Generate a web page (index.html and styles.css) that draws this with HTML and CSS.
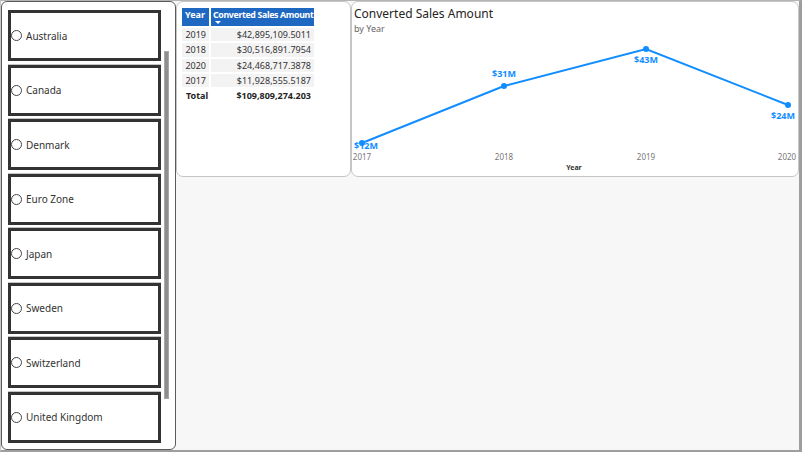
FILE: index.html
```html
<!DOCTYPE html>
<html>
<head>
<meta charset="utf-8">
<link rel="stylesheet" href="styles.css">
</head>
<body>
<div class="frame">
  <div class="slicer">
    <div class="items">
      <div class="opt"><div class="box"><span class="radio"></span><span class="lbl">Australia</span></div></div>
      <div class="opt"><div class="box"><span class="radio"></span><span class="lbl">Canada</span></div></div>
      <div class="opt"><div class="box"><span class="radio"></span><span class="lbl">Denmark</span></div></div>
      <div class="opt"><div class="box"><span class="radio"></span><span class="lbl">Euro Zone</span></div></div>
      <div class="opt"><div class="box"><span class="radio"></span><span class="lbl">Japan</span></div></div>
      <div class="opt"><div class="box"><span class="radio"></span><span class="lbl">Sweden</span></div></div>
      <div class="opt"><div class="box"><span class="radio"></span><span class="lbl">Switzerland</span></div></div>
      <div class="opt last"><div class="box"><span class="radio"></span><span class="lbl">United Kingdom</span></div></div>
    </div>
    <div class="scroll"><div class="thumb"></div></div>
  </div>
  <div class="canvas">
    <div class="toprow">
      <div class="card tablecard">
        <div class="grid">
          <div class="th th-year">Year</div>
          <div class="th th-amt">Converted Sales Amount<span class="sort"></span></div>
          <div class="td yr">2019</div><div class="td amt">$42,895,109.5011</div>
          <div class="td yr">2018</div><div class="td amt">$30,516,891.7954</div>
          <div class="td yr">2020</div><div class="td amt">$24,468,717.3878</div>
          <div class="td yr">2017</div><div class="td amt">$11,928,555.5187</div>
          <div class="tt">Total</div><div class="tt amt">$109,809,274.203</div>
        </div>
      </div>
      <div class="card chartcard">
        <div class="title">Converted Sales Amount</div>
        <div class="subtitle">by Year</div>
        <svg class="plot" width="449" height="176" viewBox="0 0 449 176">
          <polyline points="11,143 153,86 295,49 437,105" fill="none" stroke="#118DFF" stroke-width="2"/>
          <circle cx="11" cy="143" r="3" fill="#118DFF"/>
          <circle cx="153" cy="86" r="3" fill="#118DFF"/>
          <circle cx="295" cy="49" r="3" fill="#118DFF"/>
          <circle cx="437" cy="105" r="3" fill="#118DFF"/>
          <g class="dl">
            <text x="15" y="148.5" text-anchor="middle">$12M</text>
            <text x="153" y="77" text-anchor="middle">$31M</text>
            <text x="295" y="63" text-anchor="middle">$43M</text>
            <text x="432" y="119" text-anchor="middle">$24M</text>
          </g>
          <g class="ax">
            <text x="11" y="159.5" text-anchor="middle">2017</text>
            <text x="153" y="159.5" text-anchor="middle">2018</text>
            <text x="295" y="159.5" text-anchor="middle">2019</text>
            <text x="436" y="159.5" text-anchor="middle">2020</text>
          </g>
          <text class="axt" x="223" y="169.5" text-anchor="middle">Year</text>
        </svg>
      </div>
    </div>
  </div>
</div>
</body>
</html>
```

FILE: styles.css
```css
html, body {
  margin: 0;
  padding: 0;
  background: #ffffff;
}
body {
  font-family: "Segoe UI", "Noto Sans", "Open Sans", sans-serif;
  color: #252423;
}
.frame {
  width: 802px;
  height: 452px;
  box-sizing: border-box;
  border-top: 1px solid #b4b4b4;
  border-left: 1px solid #c8c8c8;
  border-right: 3px solid #9e9e9e;
  border-bottom: 2px solid #9e9e9e;
  background: #f7f7f7;
  display: flex;
}
.slicer {
  width: 175px;
  height: 449px;
  box-sizing: border-box;
  background: #ffffff;
  border: 1px solid #5a5a5a;
  border-radius: 6px;
  display: flex;
  padding: 8px 0 0 6px;
  flex-shrink: 0;
}
.items {
  width: 153px;
  display: flex;
  flex-direction: column;
}
.opt {
  height: 54.57px;
  box-sizing: border-box;
  border-bottom: 1px solid #c4c4c4;
  flex-shrink: 0;
}
.opt.last {
  border-bottom: none;
}
.box {
  height: 51px;
  box-sizing: border-box;
  border: 3px solid #333333;
  display: flex;
  align-items: center;
  font-size: 10px;
  color: #333333;
}
.radio {
  width: 9px;
  height: 9px;
  border: 1px solid #444;
  border-radius: 50%;
  margin-right: 4px;
  flex-shrink: 0;
}
.scroll {
  margin-left: 3px;
  padding-top: 41px;
}
.thumb {
  width: 5px;
  height: 348px;
  background: #8e8e8e;
  box-sizing: border-box;
  border: 1px solid #a8a8a8;
}
.canvas {
  flex: 1;
  display: flex;
  flex-direction: column;
}
.toprow {
  display: flex;
  height: 176px;
}
.card {
  background: #ffffff;
  border: 1px solid #c6c6c6;
  border-radius: 7px;
  box-sizing: border-box;
  height: 176px;
}
.tablecard {
  width: 175px;
  padding: 6px 0 0 5px;
}
.grid {
  display: grid;
  grid-template-columns: 27px 103px;
  column-gap: 2px;
  font-size: 9px;
}
.th {
  background: #1f68c1;
  color: #ffffff;
  font-weight: bold;
  height: 18px;
  padding: 1px 0 0 3px;
  box-sizing: border-box;
  position: relative;
  margin-bottom: 2px;
  line-height: 12px;
  white-space: nowrap;
}
.th-amt {
  letter-spacing: -0.35px;
  padding-left: 2px;
  font-size: 8.8px;
}
.sort {
  position: absolute;
  left: 4px;
  top: 13px;
  width: 0;
  height: 0;
  border-left: 3px solid transparent;
  border-right: 3px solid transparent;
  border-top: 3px solid #ffffff;
}
.td {
  background: #f3f3f3;
  height: 13.3px;
  margin-bottom: 2px;
  line-height: 13px;
  color: #333;
}
.yr {
  text-align: right;
  padding-right: 3px;
}
.amt {
  text-align: right;
  padding-right: 3px;
}
.tt {
  font-weight: bold;
  height: 14px;
  line-height: 14px;
  padding-left: 4px;
  color: #252423;
}
.tt.amt {
  padding-left: 0;
}
.chartcard {
  flex: 1;
  position: relative;
  padding: 4px 0 0 2px;
}
.title {
  font-size: 12px;
  line-height: 16px;
  color: #252423;
}
.subtitle {
  font-size: 9px;
  line-height: 12px;
  color: #666666;
  margin-top: 1px;
}
.plot {
  position: absolute;
  left: -1px;
  top: -2px;
}
.dl text {
  font-family: "Segoe UI", "Noto Sans", sans-serif;
  font-weight: bold;
  font-size: 9px;
  fill: #118DFF;
}
.ax text {
  font-family: "Segoe UI", "Noto Sans", sans-serif;
  font-size: 8px;
  fill: #777777;
}
.axt {
  font-family: "Segoe UI", "Noto Sans", sans-serif;
  font-size: 7px;
  font-weight: bold;
  fill: #333333;
}
```
